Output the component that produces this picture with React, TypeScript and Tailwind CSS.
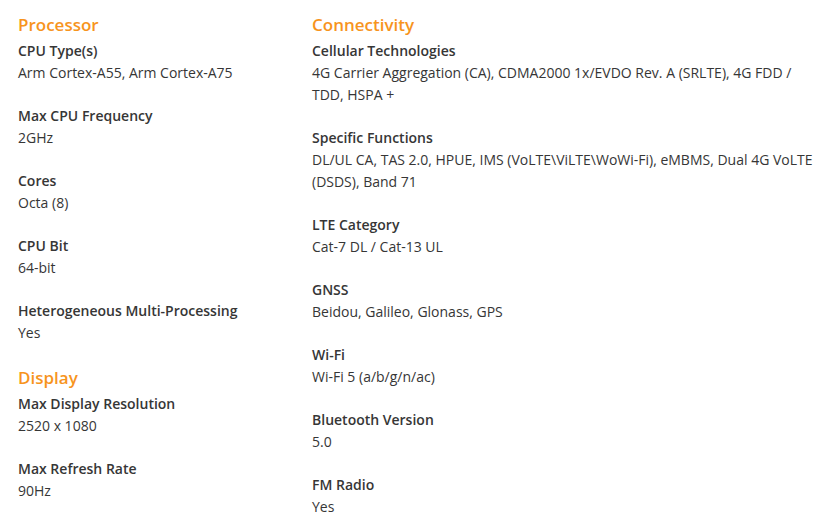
type Spec = { label: string; value: string };
type Section = { title: string; specs: Spec[] };

const left: Section[] = [
  {
    title: "Processor",
    specs: [
      { label: "CPU Type(s)", value: "Arm Cortex-A55, Arm Cortex-A75" },
      { label: "Max CPU Frequency", value: "2GHz" },
      { label: "Cores", value: "Octa (8)" },
      { label: "CPU Bit", value: "64-bit" },
      { label: "Heterogeneous Multi-Processing", value: "Yes" },
    ],
  },
  {
    title: "Display",
    specs: [
      { label: "Max Display Resolution", value: "2520 x 1080" },
      { label: "Max Refresh Rate", value: "90Hz" },
    ],
  },
];

const right: Section[] = [
  {
    title: "Connectivity",
    specs: [
      {
        label: "Cellular Technologies",
        value:
          "4G Carrier Aggregation (CA), CDMA2000 1x/EVDO Rev. A (SRLTE), 4G FDD / TDD, HSPA +",
      },
      {
        label: "Specific Functions",
        value:
          "DL/UL CA, TAS 2.0, HPUE, IMS (VoLTE\\ViLTE\\WoWi-Fi), eMBMS, Dual 4G VoLTE (DSDS), Band 71",
      },
      { label: "LTE Category", value: "Cat-7 DL / Cat-13 UL" },
      { label: "GNSS", value: "Beidou, Galileo, Glonass, GPS" },
      { label: "Wi-Fi", value: "Wi-Fi 5 (a/b/g/n/ac)" },
      { label: "Bluetooth Version", value: "5.0" },
      { label: "FM Radio", value: "Yes" },
    ],
  },
];

function SpecGroup({ section }: { section: Section }) {
  return (
    <div className="flex flex-col">
      <h2 className="text-[17px] leading-[26px] mb-[2px] font-semibold text-[#f7941d]">
        {section.title}
      </h2>
      <div className="flex flex-col gap-[21px]">
        {section.specs.map((s) => (
          <div key={s.label} className="flex flex-col">
            <h3 className="text-[14px] leading-[22px] font-semibold text-[#363636]">
              {s.label}
            </h3>
            <p className="text-[14px] leading-[22px] text-[#363636]">
              {s.value}
            </p>
          </div>
        ))}
      </div>
    </div>
  );
}

export default function App() {
  return (
    <div
      className="w-[837px] h-[526px] bg-white overflow-hidden flex flex-row pt-[12px] pl-[18px]"
      style={{ fontFamily: '"Open Sans", "Noto Sans", sans-serif' }}
    >
      <div className="w-[294px] flex flex-col gap-[21px]">
        {left.map((s) => (
          <SpecGroup key={s.title} section={s} />
        ))}
      </div>
      <div className="w-[508px] flex flex-col gap-[21px]">
        {right.map((s) => (
          <SpecGroup key={s.title} section={s} />
        ))}
      </div>
    </div>
  );
}
